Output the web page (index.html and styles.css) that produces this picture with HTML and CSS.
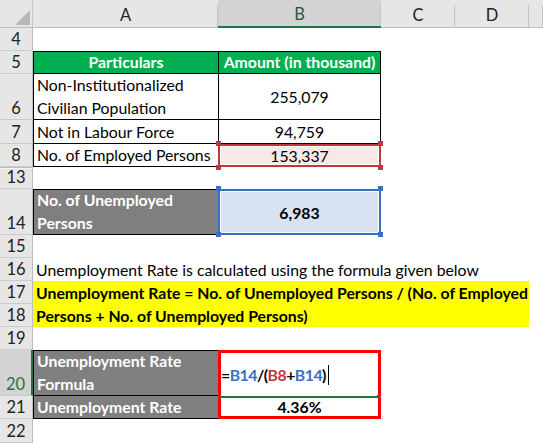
FILE: index.html
```html
<!DOCTYPE html>
<html>
<head>
<meta charset="utf-8">
<link rel="stylesheet" href="styles.css">
</head>
<body>
<div class="sheet">
  <div class="corner"></div>
  <div class="ch">A</div>
  <div class="ch sel">B</div>
  <div class="ch">C</div>
  <div class="ch">D</div>
  <div class="ch"></div>

  <div class="rh">4</div><div class="c span5"></div>

  <div class="rh">5</div>
  <div class="c th ta top">Particulars</div>
  <div class="c th tb top">Amount (in thousand)</div>
  <div class="c span3"></div>

  <div class="rh">6</div>
  <div class="c ta">Non-Institutionalized<br>Civilian Population</div>
  <div class="c tb ctr vc">255,079</div>
  <div class="c span3"></div>

  <div class="rh">7</div>
  <div class="c ta">Not in Labour Force</div>
  <div class="c tb ctr">94,759</div>
  <div class="c span3"></div>

  <div class="rh">8</div>
  <div class="c ta">No. of Employed Persons</div>
  <div class="c ref ref-red">153,337</div>
  <div class="c span3"></div>

  <div class="rh gap">13</div><div class="c span5"></div>

  <div class="rh">14</div>
  <div class="c gray ta top">No. of Unemployed<br>Persons</div>
  <div class="c ref ref-blue bold">6,983</div>
  <div class="c span3"></div>

  <div class="rh">15</div><div class="c span5"></div>

  <div class="rh">16</div>
  <div class="c span5">Unemployment Rate is calculated using the formula given below</div>

  <div class="rh">17</div>
  <div class="c yellow">Unemployment Rate = No. of Unemployed Persons / (No. of Employed<br>Persons + No. of Unemployed Persons)</div>
  <div class="c rows2"></div>
  <div class="rh">18</div>

  <div class="rh">19</div><div class="c span5"></div>

  <div class="rh active">20</div>
  <div class="c gray ta top">Unemployment Rate<br>Formula</div>
  <div class="c formula">=<span class="rb">B14</span>/(<span class="rr">B8</span>+<span class="rb">B14</span>)<span class="caret"></span></div>
  <div class="c span3"></div>

  <div class="rh">21</div>
  <div class="c gray ta">Unemployment Rate</div>
  <div class="c result">4.36%</div>
  <div class="c span3"></div>

  <div class="rh">22</div><div class="c span5"></div>
</div>
</body>
</html>
```

FILE: styles.css
```css
html, body {
  margin: 0;
  padding: 0;
  background: #fff;
}

.sheet {
  width: 543px;
  height: 443px;
  overflow: hidden;
  display: grid;
  grid-template-columns: 33px 185px 163px 74px 74px 14px;
  grid-template-rows: 28px 23px 23px 46px 24px 23px 22px 46px 23px 23px 23px 23px 23px 46px 23px 24px;
  font-family: Lato, "Open Sans", sans-serif;
  font-size: 15.8px;
  color: #000;
}

.sheet > div {
  box-sizing: border-box;
  min-width: 0;
}

/* headers */
.corner {
  background: #e6e6e6;
  border-right: 1px solid #c4c4c4;
  border-bottom: 1px solid #bdbdbd;
  display: flex;
  justify-content: flex-end;
  align-items: flex-end;
  padding: 0 2px 2px 0;
}
.corner::after {
  content: "";
  width: 15px;
  height: 15px;
  background: #b8b8b8;
  clip-path: polygon(100% 0, 100% 100%, 0 100%);
}

.ch {
  background: linear-gradient(#c2c2c2, #c2c2c2) right 5px / 1px 23px no-repeat, #e6e6e6;
  border-bottom: 1px solid #bdbdbd;
  display: flex;
  align-items: center;
  justify-content: center;
  padding-top: 2px;
  color: #222;
  font-size: 16.5px;
}
.ch.sel {
  background: linear-gradient(#c2c2c2, #c2c2c2) right 5px / 1px 23px no-repeat, #d3d3d3;
  border-bottom: 2px solid #217346;
  color: #1f5a3a;
}

.rh {
  background: #e6e6e6;
  border-right: 1px solid #bdbdbd;
  border-bottom: 1px solid #cbcbcb;
  display: flex;
  align-items: flex-end;
  justify-content: center;
  line-height: 22px;
  color: #222;
  font-size: 16.5px;
}
.rh.gap {
  border-top: 1px solid #bdbdbd;
  box-shadow: inset 0 1px 0 #f4f4f4;
}
.rh.active {
  background: #d3d3d3;
  border-right: 2px solid #217346;
  color: #217346;
}

/* cells */
.c {
  display: flex;
  align-items: flex-end;
  line-height: 23px;
  padding: 0 3px;
  white-space: nowrap;
}
.span5 { grid-column: span 5; }
.span3 { grid-column: span 3; }
.rows2 { grid-row: span 2; }
.ctr { justify-content: center; }
.vc { align-items: center; }
.bold { font-weight: 700; }

.ta {
  border-left: 1px solid #000;
  border-bottom: 1px solid #000;
}
.tb {
  border-left: 1px solid #000;
  border-right: 1px solid #000;
  border-bottom: 1px solid #000;
}
.top { border-top: 1px solid #000; }

.th {
  background: #00b050;
  color: #fff;
  font-weight: 700;
  justify-content: center;
}

.gray {
  background: #7f7f7f;
  color: #fff;
  font-weight: 700;
}

/* reference highlight boxes */
.ref {
  position: relative;
  border: 2px solid var(--c);
  box-shadow: inset 0 0 0 1px #fff;
  background: var(--fill);
  justify-content: center;
  align-items: center;
}
.ref::before {
  content: "";
  position: absolute;
  left: -4px;
  top: -5px;
  width: 5px;
  height: 5px;
  background: var(--c);
  box-shadow: 162px 0 0 var(--c), 0 var(--h) 0 var(--c), 162px var(--h) 0 var(--c);
}
.ref-red {
  --c: #c4363f;
  --fill: #f9e8e8;
  --h: 24px;
}
.ref-blue {
  --c: #3a6fc6;
  --fill: #d9e2f3;
  --h: 46px;
}

.yellow {
  grid-column: span 4;
  grid-row: span 2;
  background: #ffff00;
  font-weight: 700;
}

.formula {
  border-top: 3px solid #ff0000;
  border-left: 3px solid #ff0000;
  border-right: 3px solid #ff0000;
  padding: 0;
  align-items: center;
  font-weight: 700;
  letter-spacing: -0.5px;
}
.rb { color: #3a6fc6; }
.rr { color: #c4363f; }
.caret {
  display: inline-block;
  width: 1px;
  height: 20px;
  background: #000;
  margin-left: 2px;
}

.result {
  position: relative;
  border-left: 3px solid #ff0000;
  border-right: 3px solid #ff0000;
  border-bottom: 3px solid #ff0000;
  border-top: 2px solid #217346;
  justify-content: center;
  align-items: center;
  font-weight: 700;
  line-height: 18px;
}
.result::after {
  content: "";
  position: absolute;
  right: -2px;
  top: -3px;
  width: 3px;
  height: 3px;
  background: #217346;
}
```
